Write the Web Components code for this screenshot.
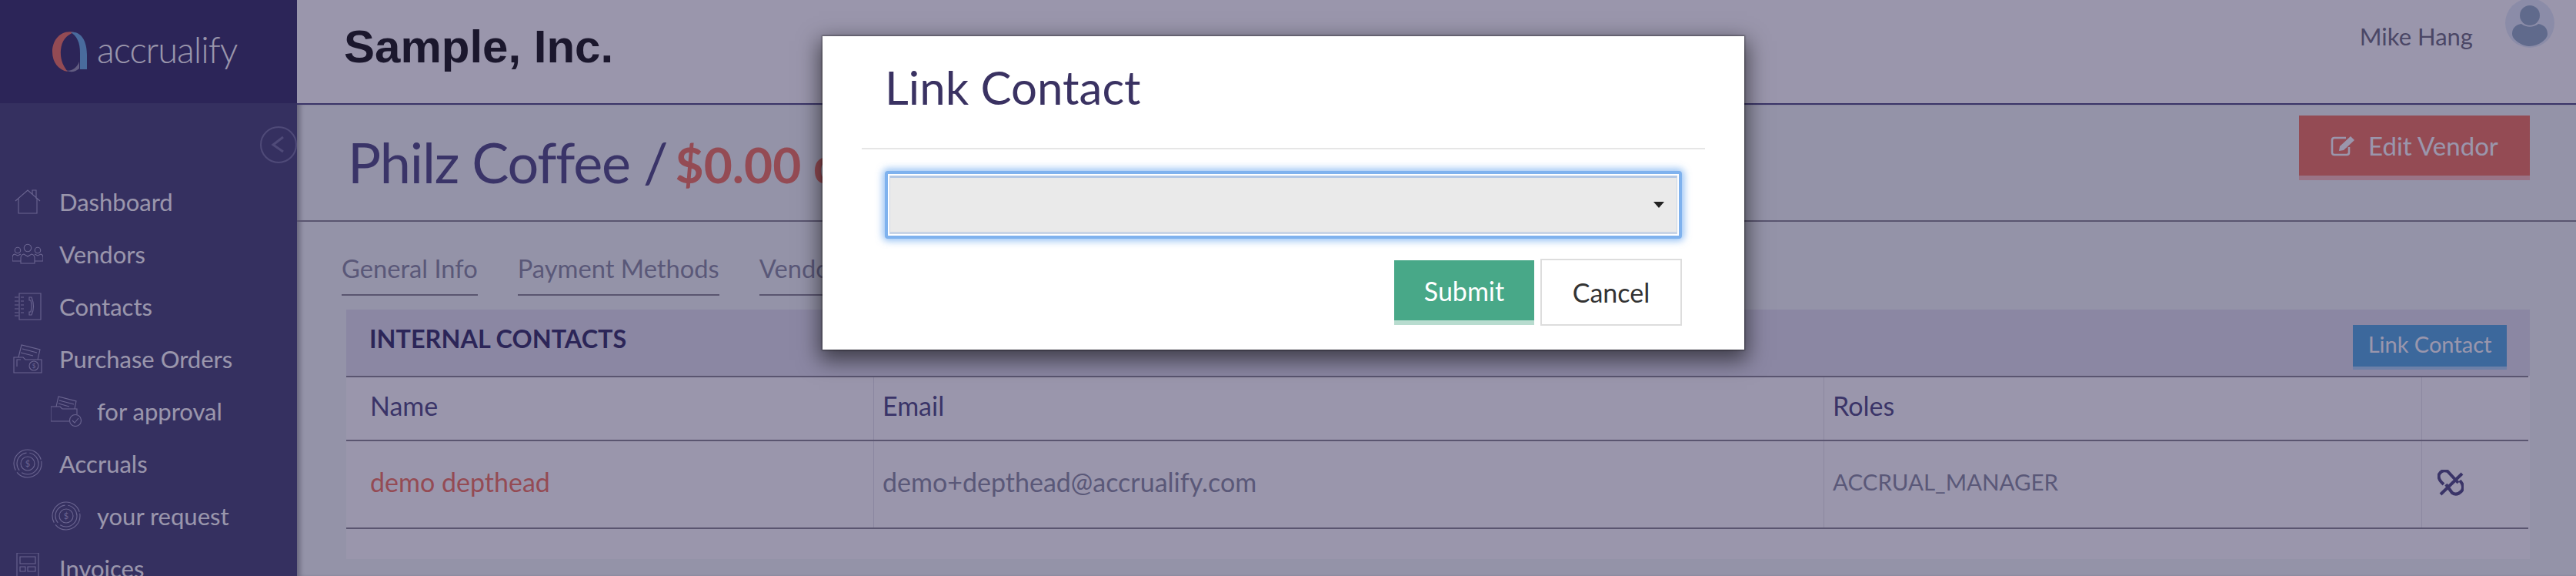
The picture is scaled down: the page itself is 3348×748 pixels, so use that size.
<!DOCTYPE html>
<html lang="en">
<head>
<meta charset="utf-8">
<title>Philz Coffee</title>
<style>
  html, body { margin: 0; padding: 0; height: 100%; overflow: hidden; background: #f3f9f7; }
  body { font-family: Lato, "Liberation Sans", sans-serif; }
  /* the $ inside the nav icons is filled, the svg around it is stroke only */
  nav-item svg text { fill: #9f9bc7; stroke: none; font-family: Lato, sans-serif; }
</style>
</head>
<body>
<app-shell>
  <side-nav slot="nav">
    <nav-item>
      <svg slot="icon" viewBox="16 248 40 40"><path d="M20 267 36 253 52 267M24 264V283H48V264M42 258V253H47V264"/></svg>
      Dashboard
    </nav-item>
    <nav-item>
      <svg slot="icon" viewBox="16 316 40 40"><circle cx="36" cy="328" r="4.7"/><circle cx="23" cy="331" r="3.7"/><circle cx="49" cy="331" r="3.7"/><path d="M27 348V341Q27 337 31 336L36 339 41 336Q45 337 45 341V348ZM27 345H16V340Q16 337 19 336L23 338 27 336M45 345H56V340Q56 337 53 336L49 338 45 336"/></svg>
      Vendors
    </nav-item>
    <nav-item>
      <svg slot="icon" viewBox="16 384 40 40"><path d="M25 387H53V421H25ZM19 392H24M19 397H24M19 402H24M19 407H24M19 412H24M19 416H24M27 392H31M27 397H31M27 402H31M27 407H31M27 412H31M38 392H41Q46 404 41 415H38V411H40Q42 404 40 396H38Z"/></svg>
      Contacts
    </nav-item>
    <nav-item>
      <svg slot="icon" viewBox="16 452 40 40"><path d="M18 470H30L33 473H54V490H18ZM22 482V473H27M24 470 28 454 52 460 49 473M29 459 48 464M27 464 43 468"/><circle cx="44" cy="481" r="6"/><text x="44" y="484" font-size="8" text-anchor="middle">$</text></svg>
      Purchase Orders
    </nav-item>
    <nav-item sub>
      <svg slot="icon" viewBox="66 520 40 40"><path d="M66 534H78L81 537H100V544M66 534V553H90M73 534 76 521 99 527 97 537M77 526 96 531M76 530 90 534"/><circle cx="98" cy="552" r="7.5"/><path d="M94 552 97 555 102 549"/></svg>
      for approval
    </nav-item>
    <nav-item>
      <svg slot="icon" viewBox="16 588 40 40"><circle cx="36" cy="608" r="18" stroke-dasharray="44 3 60 2"/><circle cx="36" cy="608" r="14" stroke-dasharray="30 4"/><circle cx="36" cy="608" r="9"/><text x="36" y="612" font-size="11" text-anchor="middle">$</text></svg>
      Accruals
    </nav-item>
    <nav-item sub>
      <svg slot="icon" viewBox="66 656 40 40"><circle cx="86" cy="676" r="18" stroke-dasharray="44 3 60 2"/><circle cx="86" cy="676" r="14" stroke-dasharray="30 4"/><circle cx="86" cy="676" r="9"/><text x="86" y="680" font-size="11" text-anchor="middle">$</text></svg>
      your request
    </nav-item>
    <nav-item>
      <svg slot="icon" viewBox="16 724 40 40"><path d="M22 724H50V764H22ZM26 729H46V738H26ZM26 742H33V748H26ZM36 742H46V748H36Z"/></svg>
      Invoices
    </nav-item>
  </side-nav>

  <top-bar slot="top">
    Sample, Inc.
    <span slot="user">Mike Hang</span>
  </top-bar>

  <vendor-head slot="main">
    Philz Coffee /
    <span slot="due">$0.00 due</span>
    <action-button slot="action" kind="danger">
      <svg slot="icon" viewBox="0 0 33 28" width="33" height="28" fill="none" stroke="currentColor" stroke-width="2.6"><path d="M24 16V23Q24 26 21 26H5Q2 26 2 23V7Q2 4 5 4H20"/><path d="M11 21 12 15 26 2 31 7 17 20Z" fill="currentColor" stroke="none"/></svg>
      Edit Vendor
    </action-button>
  </vendor-head>

  <tab-strip slot="main">
    <tab-item>General Info</tab-item>
    <tab-item>Payment Methods</tab-item>
    <tab-item>Vendor Contacts</tab-item>
  </tab-strip>

  <contacts-card slot="main">
    <span slot="title">INTERNAL CONTACTS</span>
    <action-button slot="action" kind="info">Link Contact</action-button>
    <contact-row head>
      <span slot="name">Name</span>
      <span slot="email">Email</span>
      <span slot="roles">Roles</span>
    </contact-row>
    <contact-row>
      <span slot="name">demo depthead</span>
      <span slot="email">demo+depthead@accrualify.com</span>
      <span slot="roles" class="caps">ACCRUAL_MANAGER</span>
      <svg slot="action" viewBox="0 0 34 34" width="34" height="34" fill="none" stroke="#3f3b77" stroke-width="4"><path d="M8 19Q0 12 2 6 6-1 13 2L27 17M29 14Q36 22 31 28 25 34 19 30L11 19M4 32 32 5"/></svg>
    </contact-row>
  </contacts-card>

  <modal-dialog slot="overlay">
    <span slot="title">Link Contact</span>
    <contact-select></contact-select>
    <action-button slot="footer" kind="success">Submit</action-button>
    <action-button slot="footer" kind="plain">Cancel</action-button>
  </modal-dialog>
</app-shell>

<script>
const define = (tag, html) => {
  const template = document.createElement('template');
  template.innerHTML = html;

  customElements.define(tag, class extends HTMLElement {
    constructor() {
      super();
      this.attachShadow({ mode: 'open' }).appendChild(template.content.cloneNode(true));
    }
  });
};

define('app-shell', /* html */ `
  <style>
    :host {
      display: grid;
      grid-template-columns: 386px 1fr;
      grid-template-rows: 136px 1fr;
      position: relative;
      width: 3348px;
      height: 748px;
      overflow: hidden;
      background: #f3f9f7;
    }
    .nav { grid-row: 1 / 3; }
    .main {
      display: flex;
      flex-direction: column;
      box-shadow: inset 7px 0 6px -3px rgba(0, 0, 0, .35);
    }
    .backdrop {
      position: absolute;
      inset: 0;
      background: rgba(53, 45, 89, .5);
    }
  </style>
  <div class="nav"><slot name="nav"></slot></div>
  <slot name="top"></slot>
  <div class="main"><slot name="main"></slot></div>
  <div class="backdrop"></div>
  <slot name="overlay"></slot>
`);

define('side-nav', /* html */ `
  <style>
    :host {
      display: block;
      height: 748px;
      background: #353367;
      color: #fff;
    }
    .logo {
      display: flex;
      align-items: center;
      gap: 10px;
      height: 134px;
      padding-left: 66px;
      box-sizing: border-box;
      background: #231d57;
    }
    .logo span {
      font: 300 47px Lato, sans-serif;
      letter-spacing: -1px;
      color: #fff;
      margin-top: -6px;
    }
    .collapse {
      display: flex;
      justify-content: flex-end;
      padding: 30px 0 16px;
    }
    .collapse svg { display: block; }
  </style>
  <div class="logo">
    <svg viewBox="66 28 50 56" width="50" height="56">
      <path fill="#f3694f" d="M97 31C78 27 68 42 68 56 68 70 76 80 88 82 82 75 78 66 79 54 80 42 86 34 97 31Z"/>
      <path fill="#5da9e0" d="M92 31C105 29 113 42 113 60V79H104V58C104 44 100 36 92 31Z"/>
      <path fill="#8e8aa8" d="M82 78C88 84 99 80 103 69V78C96 84 88 83 82 78Z"/>
    </svg>
    <span>accrualify</span>
  </div>
  <div class="collapse">
    <svg viewBox="0 0 48 48" width="48" height="48" fill="none" stroke="#696797" stroke-width="2"><circle cx="24" cy="24" r="23"/><path d="M30 14 17 24 30 33" stroke-width="3"/></svg>
  </div>
  <slot></slot>
`);

define('nav-item', /* html */ `
  <style>
    :host {
      display: flex;
      align-items: center;
      height: 68px;
      padding-left: 16px;
      font-size: 31px;
      color: #fff;
      white-space: nowrap;
    }
    :host([sub]) { padding-left: 66px; }
    .icon { flex: none; width: 40px; height: 40px; margin-right: 21px; }
    :host([sub]) .icon { margin-right: 20px; }
    ::slotted(svg) {
      display: block;
      width: 40px;
      height: 40px;
      fill: none;
      stroke: #9f9bc7;
      stroke-width: 1.1;
    }
  </style>
  <div class="icon"><slot name="icon"></slot></div>
  <slot></slot>
`);

define('top-bar', /* html */ `
  <style>
    :host {
      display: flex;
      align-items: center;
      height: 134px;
      padding-left: 61px;
      background: #fff;
      border-bottom: 2px solid #3f3b77;
      font: 700 60px "Liberation Sans", sans-serif;
      color: #000;
    }
    .title { flex: 1; margin-top: -14px; }
    .user {
      display: flex;
      align-items: flex-start;
      align-self: flex-start;
      gap: 42px;
      padding-right: 28px;
      font: 400 31px Lato, sans-serif;
      color: #616173;
    }
    .name { padding-top: 28px; }
    svg { display: block; margin-top: -2px; }
  </style>
  <div class="title"><slot></slot></div>
  <div class="user">
    <div class="name"><slot name="user"></slot></div>
    <svg viewBox="0 0 64 64" width="64" height="64">
      <circle cx="32" cy="32" r="32" fill="#e1ebf7"/>
      <circle cx="32" cy="22" r="13" fill="#8ba7bf"/>
      <path fill="#8ba7bf" d="M9 46C9 38 14 34 21 33 28 38 36 38 43 33 50 34 55 38 55 46 55 54 42 62 32 62 22 62 9 54 9 46Z"/>
    </svg>
  </div>
`);

define('vendor-head', /* html */ `
  <style>
    :host {
      display: flex;
      align-items: flex-start;
      justify-content: space-between;
      height: 152px;
      padding: 14px 60px 0 66px;
      box-sizing: border-box;
      border-bottom: 2px solid #7f7d87;
      font-size: 72px;
      letter-spacing: -1.2px;
      color: #3f3b77;
      white-space: nowrap;
    }
    .title { line-height: 96px; padding-top: 12px; }
    .due {
      font-size: 64px;
      font-weight: 700;
      letter-spacing: 0;
      color: #f3694f;
      margin-left: -7px;
    }
  </style>
  <div class="title"><slot></slot><span class="due"><slot name="due"></slot></span></div>
  <slot name="action"></slot>
`);

define('tab-strip', /* html */ `
  <style>
    :host {
      display: flex;
      gap: 52px;
      height: 114px;
      padding: 0 0 0 58px;
      box-sizing: border-box;
      align-items: flex-end;
    }
  </style>
  <slot></slot>
`);

define('tab-item', /* html */ `
  <style>
    :host {
      display: block;
      margin-bottom: 18px;
      padding-bottom: 14px;
      border-bottom: 2px solid #7f7d87;
      font-size: 32.7px;
      color: #7f8397;
      white-space: nowrap;
    }
  </style>
  <slot></slot>
`);

define('contacts-card', /* html */ `
  <style>
    :host {
      display: block;
      margin: 0 60px 0 64px;
      height: 324px;
      background: #fff;
    }
    .head {
      display: flex;
      align-items: flex-start;
      justify-content: space-between;
      height: 86px;
      padding: 20px 30px 0 30px;
      box-sizing: border-box;
      background: #e1e1ed;
      font-size: 32.4px;
      font-weight: 700;
      color: #231d57;
    }
    .title { margin-top: -2px; }
  </style>
  <div class="head">
    <div class="title"><slot name="title"></slot></div>
    <slot name="action"></slot>
  </div>
  <slot></slot>
`);

define('contact-row', /* html */ `
  <style>
    :host {
      display: grid;
      grid-template-columns: 685px 1235px 777px 139px;
      height: 114px;
      margin-right: 2px;
      box-sizing: border-box;
      border-top: 2px solid #7f7d87;
      font-size: 34px;
      color: #7f8397;
    }
    :host([head]) { height: 83px; color: #3f3b77; }
    :host(:last-child) { border-bottom: 2px solid #7f7d87; height: 116px; }
    .cell {
      display: flex;
      align-items: center;
      padding: 0 0 8px 11px;
      border-left: 1px solid #e1e1e7;
    }
    .name { padding-left: 31px; border-left: 0; }
    .action { padding: 0 0 4px 20px; }
    :host(:not([head])) .name { color: #f3694f; }
    ::slotted(.caps) { font-size: 29.5px; }
  </style>
  <div class="cell name"><slot name="name"></slot></div>
  <div class="cell"><slot name="email"></slot></div>
  <div class="cell"><slot name="roles"></slot></div>
  <div class="cell action"><slot name="action"></slot></div>
`);

define('action-button', /* html */ `
  <style>
    :host {
      display: inline-flex;
      align-items: center;
      justify-content: center;
      gap: 16px;
      box-sizing: border-box;
      font-size: 33px;
      font-weight: 400;
      letter-spacing: 0;
      color: #fff;
      white-space: nowrap;
    }
    :host([kind="danger"]) {
      width: 300px;
      height: 84px;
      background: #f3694f;
      border-bottom: 6px solid #ffbbb3;
    }
    :host([kind="info"]) {
      width: 200px;
      height: 58px;
      padding-bottom: 6px;
      font-size: 29px;
      background: #43a3df;
      border-bottom: 4px solid #a5d3f7;
    }
    :host([kind="success"]) {
      width: 182px;
      height: 84px;
      margin-top: 2px;
      font-size: 34px;
      background: #48a888;
      border-bottom: 6px solid #b8dccf;
    }
    :host([kind="plain"]) {
      width: 184px;
      height: 87px;
      font-size: 34px;
      color: #333;
      background: #fff;
      border: 2px solid #ddd;
    }
  </style>
  <slot name="icon"></slot>
  <slot></slot>
`);

define('modal-dialog', /* html */ `
  <style>
    :host {
      position: absolute;
      left: 1069px;
      top: 47px;
      width: 1198px;
      height: 407px;
      box-sizing: border-box;
      padding: 0 51px;
      background: #fff;
      box-shadow: 0 10px 26px 4px rgba(0, 0, 0, .55), 0 0 2px 1px rgba(0, 0, 0, .4);
    }
    header {
      height: 147px;
      padding: 30px 0 0 30px;
      box-sizing: border-box;
      border-bottom: 2px solid #e6e6e6;
      font-size: 60px;
      color: #3a3262;
    }
    .body { padding: 28px 30px 0; }
    footer {
      display: flex;
      justify-content: flex-end;
      gap: 8px;
      padding: 26px 30px 0 0;
    }
  </style>
  <header><slot name="title"></slot></header>
  <div class="body"><slot></slot></div>
  <footer><slot name="footer"></slot></footer>
`);

define('contact-select', /* html */ `
  <style>
    :host {
      display: block;
      height: 88px;
      box-sizing: border-box;
      border: 4px solid #7fb2ee;
      border-radius: 4px;
      padding: 2px;
      background: #fff;
      box-shadow: 0 0 10px 3px rgba(110, 170, 240, .7);
    }
    .field {
      display: flex;
      align-items: center;
      justify-content: flex-end;
      height: 100%;
      box-sizing: border-box;
      padding-right: 16px;
      background: #eaeaea;
      border-top: 3px solid #b4c8e4;
      border-bottom: 3px solid #c8d4e6;
      border-left: 1px solid #c8d4e6;
      border-right: 1px solid #c8d4e6;
    }
    .caret {
      width: 0;
      height: 0;
      border-left: 7px solid transparent;
      border-right: 7px solid transparent;
      border-top: 8px solid #222;
    }
  </style>
  <div class="field"><div class="caret"></div></div>
`);
</script>
</body>
</html>
